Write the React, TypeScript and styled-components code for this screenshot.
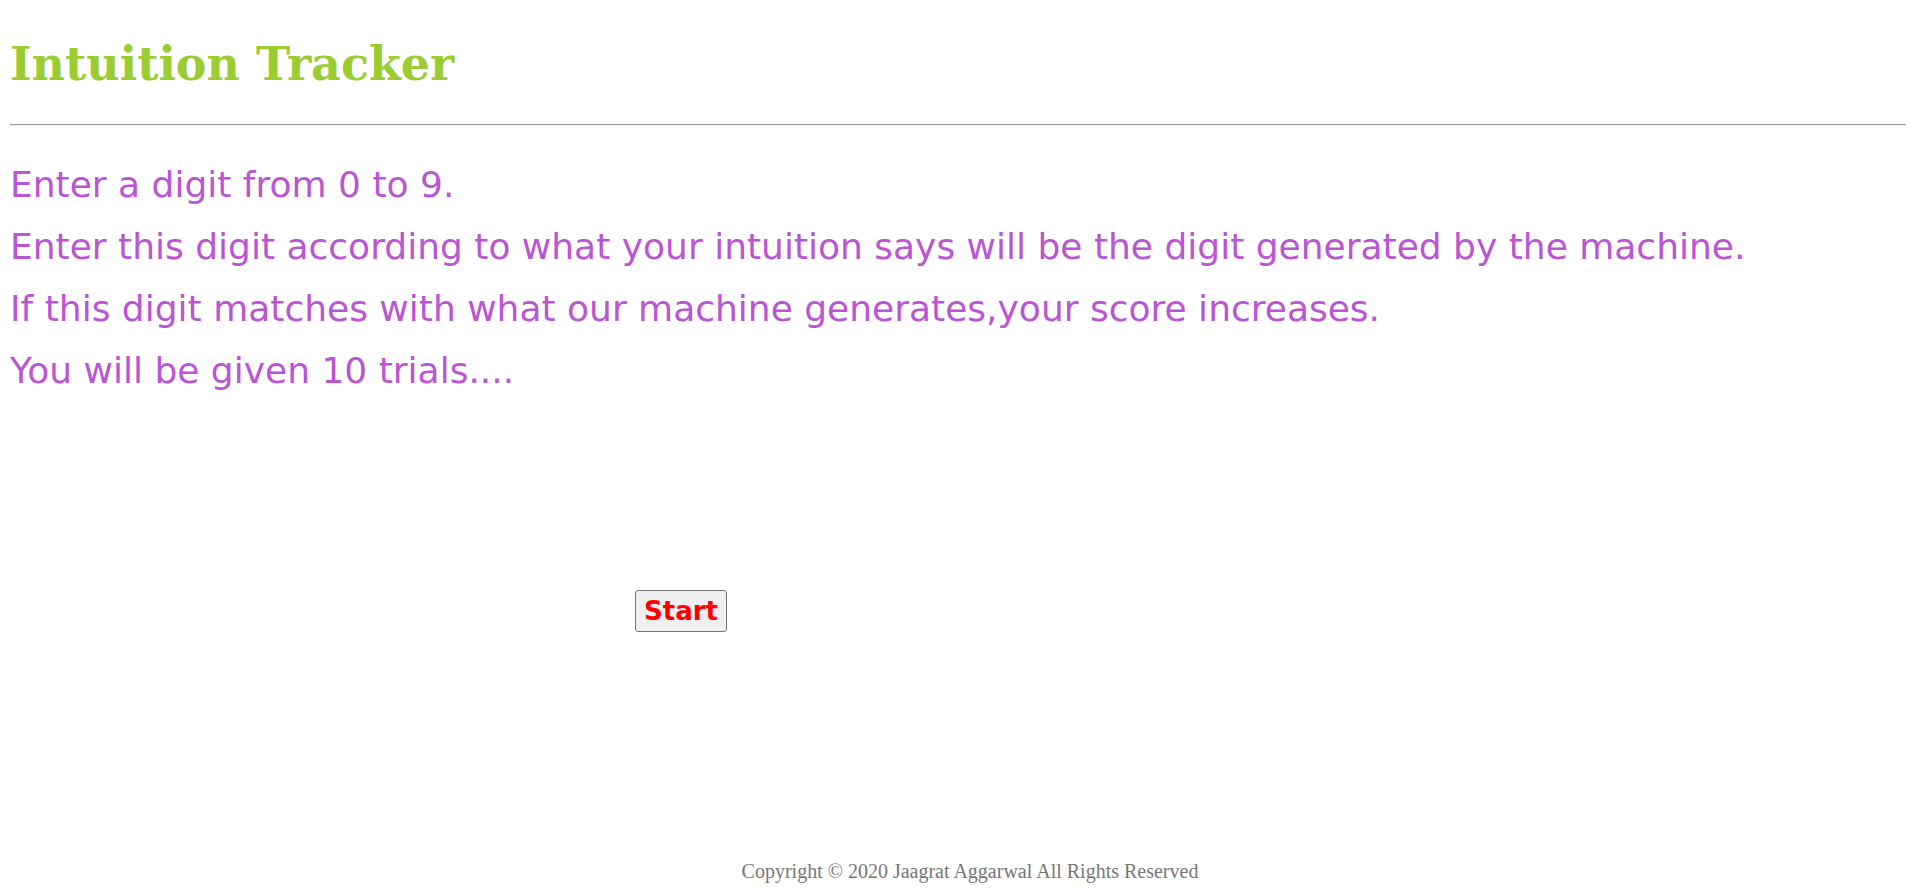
import React from "react";
import styled, { createGlobalStyle } from "styled-components";

const GlobalStyle = createGlobalStyle`
  html, body {
    margin: 0;
    padding: 0;
    background: #ffffff;
  }
  body {
    margin: 8px;
  }
`;

const lines = [
  "Enter a digit from 0 to 9.",
  "Enter this digit according to what your intuition says will be the digit generated by the machine.",
  "If this digit matches with what our machine generates,your score increases.",
  "You will be given 10 trials....",
];

export default function App() {
  return (
    <>
      <GlobalStyle />
      <s.Page>
        <s.Title>Intuition Tracker</s.Title>
        <s.Rule />
        <s.Rules>
          {lines.map((line) => (
            <s.Line key={line}>{line}</s.Line>
          ))}
        </s.Rules>
        <s.Controls>
          <s.StartButton type="button">Start</s.StartButton>
        </s.Controls>
        <s.Footer>Copyright © 2020 Jaagrat Aggarwal All Rights Reserved</s.Footer>
      </s.Page>
    </>
  );
}

const s = {
  Page: styled.div`
    display: flex;
    flex-direction: column;
    min-height: 879px;
  `,
  Title: styled.h1`
    margin: 30px 0 0 2px;
    font-family: "DejaVu Serif", Georgia, serif;
    font-weight: bold;
    font-size: 46px;
    line-height: 52px;
    color: #9acd32;
  `,
  Rule: styled.hr`
    margin: 34px 0 0 2px;
    border: 0;
    border-top: 1px solid #9a9a9a;
    border-bottom: 1px solid #eeeeee;
  `,
  Rules: styled.div`
    display: flex;
    flex-direction: column;
    margin-top: 28px;
  `,
  Line: styled.p`
    margin: 0;
    padding-left: 2px;
    font-family: "DejaVu Sans", Tahoma, sans-serif;
    font-size: 36px;
    line-height: 62px;
    color: #ba55d3;
  `,
  Controls: styled.div`
    padding: 188px 0 0 627px;
  `,
  StartButton: styled.button`
    height: 42px;
    padding: 0 8px;
    background: #efefef;
    border: 1px solid #767676;
    border-radius: 3px;
    font-family: "DejaVu Sans", Tahoma, sans-serif;
    font-weight: bold;
    font-size: 26px;
    color: #ff0000;
  `,
  Footer: styled.footer`
    margin-top: auto;
    padding: 0 0 5px 26px;
    text-align: center;
    font-family: "Liberation Serif", "Times New Roman", serif;
    font-size: 20px;
    line-height: 22px;
    color: #777777;
  `,
};
